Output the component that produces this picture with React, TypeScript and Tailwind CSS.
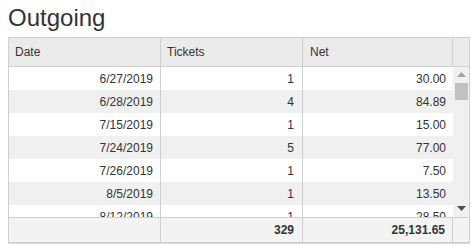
import React from 'react';

const rows = [
  { date: '6/27/2019', tickets: '1', net: '30.00' },
  { date: '6/28/2019', tickets: '4', net: '84.89' },
  { date: '7/15/2019', tickets: '1', net: '15.00' },
  { date: '7/24/2019', tickets: '5', net: '77.00' },
  { date: '7/26/2019', tickets: '1', net: '7.50' },
  { date: '8/5/2019', tickets: '1', net: '13.50' },
  { date: '8/12/2019', tickets: '1', net: '28.50' },
];

export default function App() {
  return (
    <main className="bg-white w-[476px] h-[251px] pl-2 pt-[4px] text-[#333] font-['Liberation_Sans',Arial,sans-serif]">
      {/* title */}
      <h2 className="text-[24px] leading-[28px] h-[33px] font-normal">Outgoing</h2>

      {/* grid */}
      <div className="w-[462px] border border-[#cfcfcf] text-[12px] shadow-[0_1px_0_#d6d6d6]">
        {/* header */}
        <div className="flex h-[29px] bg-[#ebebeb] border-b border-[#cfcfcf]">
          <div className="w-[152px] border-r border-[#cfcfcf] pl-[6px] flex items-center">Date</div>
          <div className="w-[142px] border-r border-[#cfcfcf] pl-[6px] flex items-center">Tickets</div>
          <div className="w-[150px] border-r border-[#cfcfcf] pl-[7px] flex items-center">Net</div>
          <div className="flex-1" />
        </div>

        {/* body, last row is cut off by the footer like in the grid */}
        <div className="flex h-[150px] overflow-hidden">
          <div className="w-[444px]">
            {rows.map((r, i) => (
              <div key={r.date} className={`flex h-[23px] items-center ${i % 2 ? 'bg-[#f0f0f0]' : 'bg-white'}`}>
                <div className="w-[152px] h-full border-r border-[#cfcfcf] pr-[7px] flex items-center justify-end">{r.date}</div>
                <div className="w-[142px] h-full border-r border-[#cfcfcf] pr-[8px] flex items-center justify-end">{r.tickets}</div>
                <div className="w-[150px] h-full pr-[7px] flex items-center justify-end">{r.net}</div>
              </div>
            ))}
          </div>
          {/* scrollbar */}
          <div className="flex-1 bg-[#f0f0f0] flex flex-col items-center">
            <svg width="9" height="5" viewBox="0 0 9 5" className="mt-[5px]">
              <path d="M0 5 L4.5 0 L9 5 Z" fill="#a3a3a3" />
            </svg>
            <div className="w-[13px] h-[17px] bg-[#c1c1c1] mt-[6px]" />
            <div className="flex-1" />
            <svg width="9" height="5" viewBox="0 0 9 5" className="mb-[6px]">
              <path d="M0 0 L9 0 L4.5 5 Z" fill="#505050" />
            </svg>
          </div>
        </div>

        {/* footer */}
        <div className="flex h-[25px] bg-[#f3f3f3] border-t border-[#cfcfcf] font-bold">
          <div className="w-[152px] border-r border-[#cfcfcf]" />
          <div className="w-[142px] border-r border-[#cfcfcf] pr-[8px] flex items-center justify-end">329</div>
          <div className="w-[150px] border-r border-[#cfcfcf] pr-[7px] flex items-center justify-end">25,131.65</div>
          <div className="flex-1" />
        </div>
      </div>
    </main>
  );
}
